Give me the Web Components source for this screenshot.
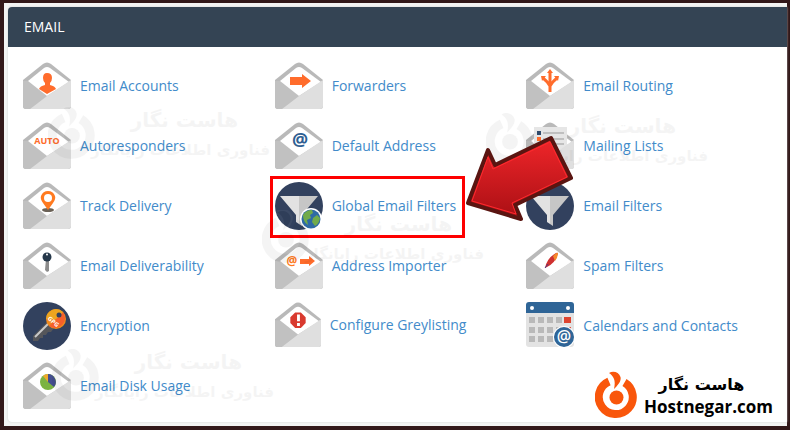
<!DOCTYPE html>
<html lang="en">
<head>
<meta charset="utf-8">
<meta name="viewport" content="width=device-width, initial-scale=1">
<title>Email</title>
<style>
  body {
    margin: 0;
    font-family: "Open Sans", "Noto Sans", sans-serif;
    font-size: 14px;
    color: #000;
  }
</style>
</head>
<body>

<page-frame>
  <feature-group heading="EMAIL">
    <feature-item icon="user">Email Accounts</feature-item>
    <feature-item icon="forward">Forwarders</feature-item>
    <feature-item icon="routing">Email Routing</feature-item>
    <feature-item icon="auto">Autoresponders</feature-item>
    <feature-item icon="at">Default Address</feature-item>
    <feature-item icon="lists">Mailing Lists</feature-item>
    <feature-item icon="track">Track Delivery</feature-item>
    <feature-item icon="globalFilter" marked>Global Email Filters</feature-item>
    <feature-item icon="filter">Email Filters</feature-item>
    <feature-item icon="key">Email Deliverability</feature-item>
    <feature-item icon="importer">Address Importer</feature-item>
    <feature-item icon="spam">Spam Filters</feature-item>
    <feature-item icon="encryption">Encryption</feature-item>
    <feature-item icon="greylist" small>Configure Greylisting</feature-item>
    <feature-item icon="calendar">Calendars and Contacts</feature-item>
    <feature-item icon="disk">Email Disk Usage</feature-item>

    <water-mark slot="overlay" style="left: 40px; top: 99px"></water-mark>
    <water-mark slot="overlay" style="left: 254px; top: 203px"></water-mark>
    <water-mark slot="overlay" style="left: 478px; top: 105px"></water-mark>
    <water-mark slot="overlay" style="left: 44px; top: 341px"></water-mark>
    <host-brand slot="overlay"></host-brand>
  </feature-group>
</page-frame>

<script>
const LOGO = `
  <path d="M14 10.5 A17 17 0 1 0 29.500 11.500" fill="none" stroke="currentColor" stroke-width="8"/>
  <path d="M14 2 C18 -0.5 24 1 25.500 6 C26.500 10 23 14 19 18 C20.500 11 20 6 14 2Z" fill="currentColor" stroke="#fff" stroke-width="4" paint-order="stroke"/>
  <circle cx="21.500" cy="26.500" r="7" fill="currentColor"/>`;

const envelope = (art) => `
  <path d="M0 18 L20 2 Q24 -1 28 2 L48 18 V44 Q48 47 45 47 H3 Q0 47 0 44Z" fill="#b9b9b9"/>
  <path d="M0 19 L5 19 L24 34 L7 47 H3 Q0 47 0 44Z" fill="#c1c1c1"/>
  <path d="M5 19 L21 6 Q24 4 27 6 L46 20 L24 34Z" fill="#fff"/>
  <path d="M48 18 V44 Q48 47 45 47 H7 L24 34Z" fill="#dfdfdf"/>
  ${art}`;

const funnel = `
  <circle cx="24" cy="24" r="24" fill="#32415e"/>
  <path d="M5 14 H24 V42 L21 40 V33Z" fill="#e2e2e2"/>
  <path d="M24 14 H43 L27 33 V44 L24 42Z" fill="#c6c6c6"/>`;

const ICONS = {
  user: envelope(`<path d="M24 11 Q29 11 29 16 Q29 19 27 21 V23 Q32 24 33 27 L24 32 L16 27 Q17 24 22 23 V21 Q20 19 20 16 Q20 11 24 11Z" fill="#ff6c2c"/>`),
  forward: envelope(`<path d="M15 15 H27 V12 L36 19 L27 26 V23 H15Z" fill="#ff6c2c"/>`),
  routing: envelope(`
    <path d="M24 30 V10 M24 24 Q21 19 17 16 M24 24 Q27 19 31 16" fill="none" stroke="#ff6c2c" stroke-width="3"/>
    <path d="M21 11 L24 7 L27 11Z M15 14 L20 14 L16 19Z M33 14 L28 14 L32 19Z" fill="#ff6c2c"/>`),
  auto: envelope(`<text x="24" y="22" text-anchor="middle" font-size="9" font-weight="700" fill="#ff6c2c">AUTO</text>`),
  at: envelope(`<text x="25" y="24" text-anchor="middle" font-size="18" font-weight="700" fill="#2f6092">@</text>`),
  lists: envelope(`
    <path d="M8 5 H41 V28 H8Z" fill="#e6e6e6"/>
    <path d="M11 9 H15 V13 H11Z" fill="#2f4a6b"/>
    <path d="M11 15 H15 V19 H11Z" fill="#ff6c2c"/>
    <path d="M17 11 H38 M17 17 H38 M17 22 H38" stroke="#999" stroke-width="1"/>
    <path d="M48 18 V44 Q48 47 45 47 H7 L28 32Z" fill="#dfdfdf"/>`),
  track: envelope(`
    <ellipse cx="25" cy="28" rx="6" ry="2" fill="#6b6257"/>
    <path d="M25 28 L20 21 Q17 17 18 14 Q20 9 25 9 Q30 9 32 14 Q33 17 30 21Z" fill="#ff7a20"/>
    <circle cx="25" cy="16" r="4" fill="#fff"/>`),
  key: envelope(`
    <path d="M23 17 H26 V29 L24 30 L22 28Z" fill="#8c8c8c"/>
    <circle cx="24" cy="15" r="4.500" fill="#26384a"/>
    <circle cx="24" cy="12.500" r="1" fill="#fff"/>`),
  importer: envelope(`
    <text x="17" y="23" text-anchor="middle" font-size="12" font-weight="700" fill="#ff7a20">@</text>
    <path d="M25 17 H34 V14 L40 19 L34 24 V22 H25Z" fill="#ff6c2c"/>`),
  spam: envelope(`
    <path d="M19 26 Q21 16 30 11 Q33 10 31 14 Q29 21 21 25Z" fill="#cf3030"/>
    <path d="M27 14 Q31 10 32 11 Q32 15 29 19Z" fill="#f58a2c"/>
    <path d="M19 26 L22 22" stroke="#4a3a8a" stroke-width="1"/>`),
  greylist: envelope(`
    <path d="M21 11 H27 L32 16 V22 L27 27 H21 L16 22 V16Z" fill="#d93a2f"/>
    <path d="M23 13 H26 V20 H23Z M23 22 H26 V25 H23Z" fill="#fff"/>`),
  disk: envelope(`
    <circle cx="25" cy="20" r="8" fill="#7cb342"/>
    <path d="M25 20 V12 A8 8 0 0 1 31 25Z" fill="#454f8f"/>
    <path d="M25 20 V12 A8 8 0 0 0 20 14Z" fill="#f0a92c"/>`),
  filter: funnel,
  globalFilter: `${funnel}
    <circle cx="36" cy="37" r="11" fill="#fff"/>
    <circle cx="36" cy="37" r="9.500" fill="#2f6aa5"/>
    <path d="M28 33 Q31 28 37 28 L38 31 L35 33 L36 36 L32 38 L33 43 Q28 40 28 33Z M38 36 L42 33 L45 36 Q44 42 40 44 L37 40Z" fill="#71ab4b"/>`,
  encryption: `
    <circle cx="24" cy="24" r="24" fill="#32415e"/>
    <path d="M25 19 L10 34 V39 H15 L17 36 H20 V33 H23 L25 30 H28 L31 26Z" fill="#55565a"/>
    <path d="M26 21 L12 35" stroke="#c9c9c9" stroke-width="2"/>
    <circle cx="33" cy="17" r="10" fill="#f08a1c"/>
    <path d="M40 10 A10 10 0 0 1 26 24Z" fill="#f6602b"/>
    <path d="M23 17 A10 10 0 0 1 40 10 L33 17Z" fill="#eda41f"/>
    <circle cx="36" cy="13" r="2.500" fill="#32415e"/>
    <text x="31" y="22" text-anchor="middle" font-size="6" font-weight="700" fill="#fff" transform="rotate(42 31 19)">GPG</text>`,
  calendar: `
    <path d="M0 8 H48 V42 Q48 45 45 45 H3 Q0 45 0 42Z" fill="#e3e3e3"/>
    <path d="M3 0 H45 Q48 0 48 3 V11 H0 V3 Q0 0 3 0Z" fill="#2f6597"/>
    <circle cx="6" cy="6" r="2" fill="#fff"/><circle cx="42" cy="6" r="2" fill="#fff"/>
    <path d="M3 15h6v6h-6z M12 15h6v6h-6z M21 15h6v6h-6z M30 15h6v6h-6z M3 25h6v6h-6z M12 25h6v6h-6z M21 25h6v6h-6z M30 25h6v6h-6z M3 34h6v6h-6z M12 34h6v6h-6z M21 34h6v6h-6z" fill="#b9b9b9"/>
    <path d="M38 15h7v6h-7z M38 25h7v6h-7z" fill="#dc4430"/>
    <circle cx="38" cy="35" r="11" fill="#fff"/>
    <circle cx="38" cy="35" r="10" fill="#2f6597"/>
    <text x="38" y="40" text-anchor="middle" font-size="16" font-weight="600" fill="#fff">@</text>`,
};

class PageFrame extends HTMLElement {
  constructor() {
    super();
    this.attachShadow({ mode: "open" });
  }

  connectedCallback() {
    this.shadowRoot.innerHTML = `
      <style>
        :host {
          display: block;
          box-sizing: border-box;
          min-height: 100vh;
          padding: 4px 0 4px 4px;
          background: #f3f4f3;
          border: solid #321819;
          border-width: 3px 3px 4px 4px;
        }
      </style>
      <slot></slot>
    `;
  }
}

class FeatureGroup extends HTMLElement {
  constructor() {
    super();
    this.attachShadow({ mode: "open" });
  }

  connectedCallback() {
    const heading = this.getAttribute("heading") ?? "";

    this.shadowRoot.innerHTML = `
      <style>
        :host {
          display: block;
          position: relative;
          background: #fff;
          border-radius: 4px 0 0 4px;
          box-shadow: 0 0 2px #ccc;
        }

        h2 {
          margin: 0;
          padding: 0 16px;
          background: #344454;
          border-radius: 4px 0 0 0;
          color: #fff;
          font-size: 14px;
          font-weight: 400;
          line-height: 40px;
        }

        .items {
          display: grid;
          grid-template-columns: repeat(3, 1fr);
          gap: 12px 0;
          padding: 15px 9px 12px 15px;
        }
      </style>
      <h2>${heading}</h2>
      <div class="items"><slot></slot></div>
      <slot name="overlay"></slot>
    `;
  }
}

class FeatureItem extends HTMLElement {
  constructor() {
    super();
    this.attachShadow({ mode: "open" });
  }

  connectedCallback() {
    const icon = ICONS[this.getAttribute("icon")] ?? "";
    const pointer = this.hasAttribute("marked") ? "<red-pointer></red-pointer>" : "";

    this.shadowRoot.innerHTML = `
      <style>
        :host {
          display: flex;
          align-items: flex-start;
          min-height: 48px;
          --icon: 48px;
        }

        :host([small]) {
          --icon: 46px;
        }

        a {
          position: relative;
          display: flex;
          align-items: center;
          gap: 9px;
          color: #428bca;
          line-height: 20px;
          text-decoration: none;
          white-space: nowrap;
        }

        :host([marked]) a::after {
          content: "";
          position: absolute;
          inset: -6px -9px -8px -5px;
          border: 3px solid #fe0000;
        }

        svg {
          flex: none;
          width: var(--icon);
          height: var(--icon);
        }

        red-pointer {
          position: absolute;
          z-index: 1;
          left: calc(100% + 8px);
          top: -50px;
        }
      </style>
      <a href="#">
        <svg viewBox="0 0 48 48" aria-hidden="true">${icon}</svg>
        <slot></slot>
        ${pointer}
      </a>
    `;
  }
}

class RedPointer extends HTMLElement {
  constructor() {
    super();
    this.attachShadow({ mode: "open" });
  }

  connectedCallback() {
    this.shadowRoot.innerHTML = `
      <style>
        :host {
          display: block;
        }

        svg {
          display: block;
          width: 110px;
          height: 94px;
        }
      </style>
      <svg viewBox="0 0 110 94" aria-hidden="true">
        <defs>
          <linearGradient id="fill" x1="0" y1="0" x2="0" y2="1">
            <stop offset="0" stop-color="#f0262a"/>
            <stop offset="1" stop-color="#a90f14"/>
          </linearGradient>
        </defs>
        <path d="M4 71 L24 18 L31 33 L87 6 L107 46 L51 73 L57 87Z" fill="url(#fill)" stroke="#5a1511" stroke-width="4" stroke-linejoin="round"/>
        <path d="M8 69 L24 25 L29 37 L86 10 L103 45 L48 71 L52 82Z" fill="none" stroke="#ff2a2e" stroke-width="1"/>
      </svg>
    `;
  }
}

class WaterMark extends HTMLElement {
  constructor() {
    super();
    this.attachShadow({ mode: "open" });
  }

  connectedCallback() {
    this.shadowRoot.innerHTML = `
      <style>
        :host {
          position: absolute;
          display: flex;
          width: 222px;
          opacity: 0.04;
          pointer-events: none;
          font-family: "DejaVu Sans", sans-serif;
          white-space: nowrap;
        }

        svg {
          flex: none;
          width: 48px;
          height: 54px;
        }

        div {
          flex: 1;
          min-width: 0;
          direction: rtl;
        }

        p {
          margin: 0;
        }

        .name {
          padding-right: 32px;
          font-size: 20px;
          font-weight: 700;
          line-height: 28px;
        }

        .tagline {
          font-size: 15px;
          font-weight: 700;
          line-height: 32px;
        }
      </style>
      <svg viewBox="0 0 43 48" aria-hidden="true">${LOGO}</svg>
      <div lang="fa">
        <p class="name">هاست نگار</p>
        <p class="tagline">فناوری اطلاعات رایانگار</p>
      </div>
    `;
  }
}

class HostBrand extends HTMLElement {
  constructor() {
    super();
    this.attachShadow({ mode: "open" });
  }

  connectedCallback() {
    this.shadowRoot.innerHTML = `
      <style>
        :host {
          position: absolute;
          right: 14px;
          bottom: 3px;
          display: flex;
          align-items: center;
          gap: 6px;
          text-align: center;
        }

        svg {
          width: 43px;
          height: 48px;
          color: #f9560b;
        }

        p {
          margin: 0;
        }

        .name {
          padding-right: 14px;
          font-family: "DejaVu Sans", sans-serif;
          font-size: 16px;
          font-weight: 700;
          line-height: 24px;
        }

        .site {
          font-size: 17px;
          font-weight: 700;
          line-height: 20px;
        }
      </style>
      <svg viewBox="0 0 43 48" aria-hidden="true">${LOGO}</svg>
      <div>
        <p class="name" lang="fa" dir="rtl">هاست نگار</p>
        <p class="site">Hostnegar.com</p>
      </div>
    `;
  }
}

customElements.define("red-pointer", RedPointer);
customElements.define("feature-item", FeatureItem);
customElements.define("water-mark", WaterMark);
customElements.define("host-brand", HostBrand);
customElements.define("feature-group", FeatureGroup);
customElements.define("page-frame", PageFrame);
</script>
</body>
</html>
